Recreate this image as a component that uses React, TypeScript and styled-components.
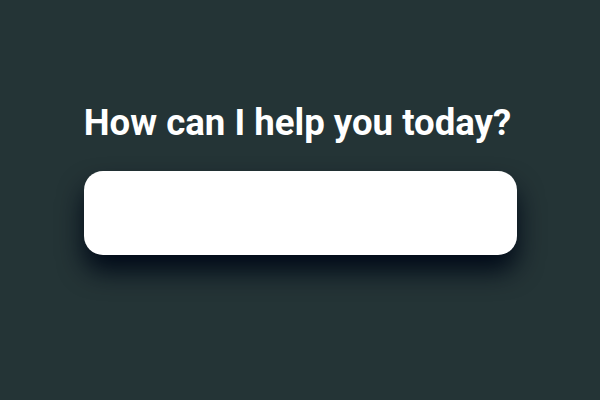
import React from "react";
import styled, { createGlobalStyle } from "styled-components";

const Global = createGlobalStyle`
  html, body { margin: 0; padding: 0; }
  body { background: #243436; font-family: Roboto, "Noto Sans", sans-serif; }
`;

const Page = styled.div`
  width: 600px;
  height: 400px;
  background: #243436;
  display: flex;
  flex-direction: column;
  align-items: center;
  padding-top: 101px;
  box-sizing: border-box;
`;

const Title = styled.h1`
  margin: 0 5px 0 0;
  color: #ffffff;
  font-family: Roboto, sans-serif;
  font-weight: 700;
  font-size: 36.6px;
  line-height: 44px;
  letter-spacing: 0;
`;

const InputBox = styled.div`
  margin-top: 26px;
  width: 433px;
  height: 84px;
  background: #ffffff;
  border-radius: 19px;
  box-shadow: 0 16px 26px rgba(0, 10, 24, 1);
`;

export default function App() {
  return (
    <>
      <Global />
      <Page>
        <Title>How can I help you today?</Title>
        <InputBox />
      </Page>
    </>
  );
}
